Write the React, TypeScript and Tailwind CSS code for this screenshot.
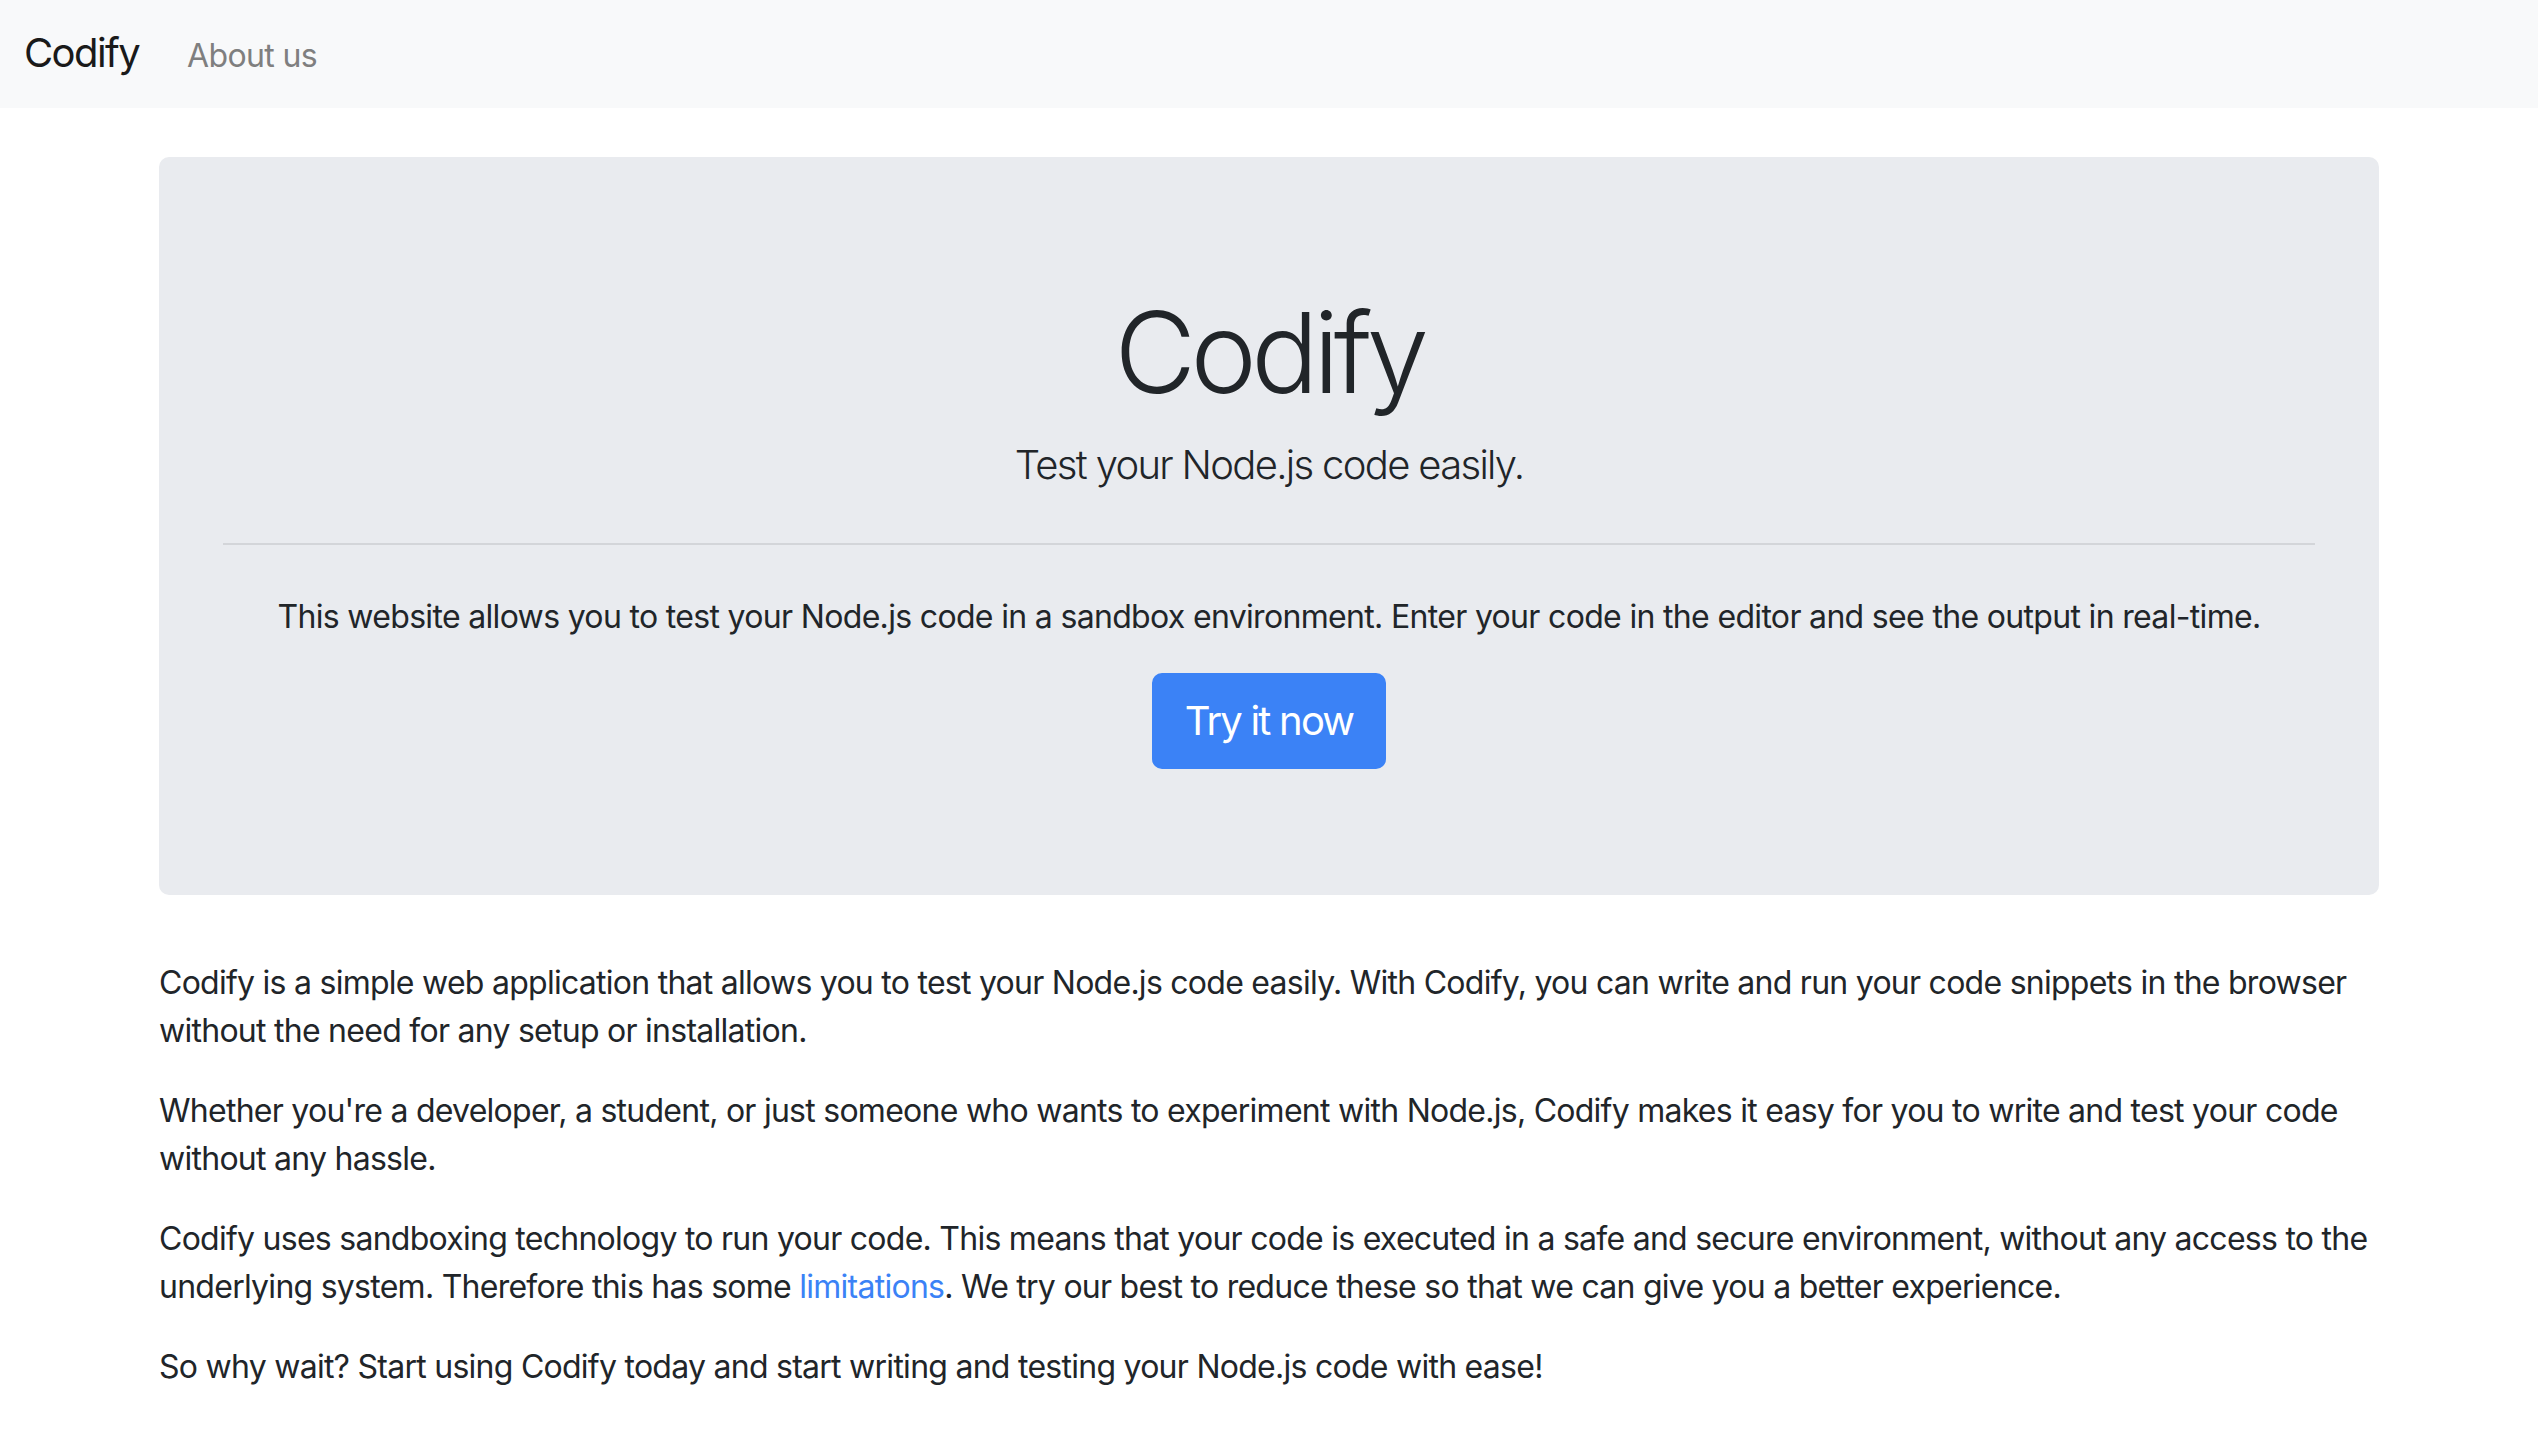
import React from "react";

const font = { fontFamily: "Inter, 'Noto Sans', sans-serif" };

const Navbar = () => {
  return (
    <nav className="flex h-[108px] items-baseline gap-[48px] bg-[#f8f9fa] px-[24px] pt-[23px]">
      <a href="#" className="text-[40px] leading-[60px] tracking-[-0.04em] text-[#1a1a1a]">
        Codify
      </a>
      <a href="#" className="text-[32px] leading-[48px] tracking-[-0.02em] text-[#7f7f7f]">
        About us
      </a>
    </nav>
  );
};

const Hero = () => {
  return (
    <div className="mt-[49px] mb-[64px] rounded-[10px] bg-[#e9ebef] px-[64px] pt-[128px] pb-[126px] text-center">
      <h1 className="mb-[16px] text-[112px] leading-[1.2] font-light tracking-[-0.05em] text-[#212529]">
        Codify
      </h1>
      <p className="text-[40px] leading-[60px] font-light tracking-[-0.042em] text-[#212529]">
        Test your Node.js code easily.
      </p>
      <hr className="my-[48px] border-t-2 border-[#d3d5d9]" />
      <p className="mb-[32px] text-[32px] leading-[48px] tracking-[-0.021em] text-[#212529]">
        This website allows you to test your Node.js code in a sandbox environment. Enter your code in the editor and see
        the output in real-time.
      </p>
      <a
        href="#"
        className="inline-block rounded-[10px] border-2 border-[#3b82f6] bg-[#3b82f6] px-[31px] py-[16px] text-[40px] leading-[60px] tracking-[-0.045em] text-white"
      >
        Try it now
      </a>
    </div>
  );
};

export default function App() {
  return (
    <div className="min-h-screen bg-white text-[#212529]" style={font}>
      <Navbar />
      <main className="mx-auto w-[2280px] px-[30px]">
        <Hero />
        <div className="text-[32px] leading-[48px] tracking-[-0.023em]">
          <p className="mb-[32px]">
            Codify is a simple web application that allows you to test your Node.js code easily. With Codify, you can
            write and run your code snippets in the browser without the need for any setup or installation.
          </p>
          <p className="mb-[32px]">
            Whether you're a developer, a student, or just someone who wants to experiment with Node.js, Codify makes it
            easy for you to write and test your code without any hassle.
          </p>
          <p className="mb-[32px]">
            Codify uses sandboxing technology to run your code. This means that your code is executed in a safe and
            secure environment, without any access to the underlying system. Therefore this has some{" "}
            <a href="#" className="text-[#3b82f6]">
              limitations
            </a>
            . We try our best to reduce these so that we can give you a better experience.
          </p>
          <p className="mb-[32px]">
            So why wait? Start using Codify today and start writing and testing your Node.js code with ease!
          </p>
        </div>
      </main>
    </div>
  );
}
